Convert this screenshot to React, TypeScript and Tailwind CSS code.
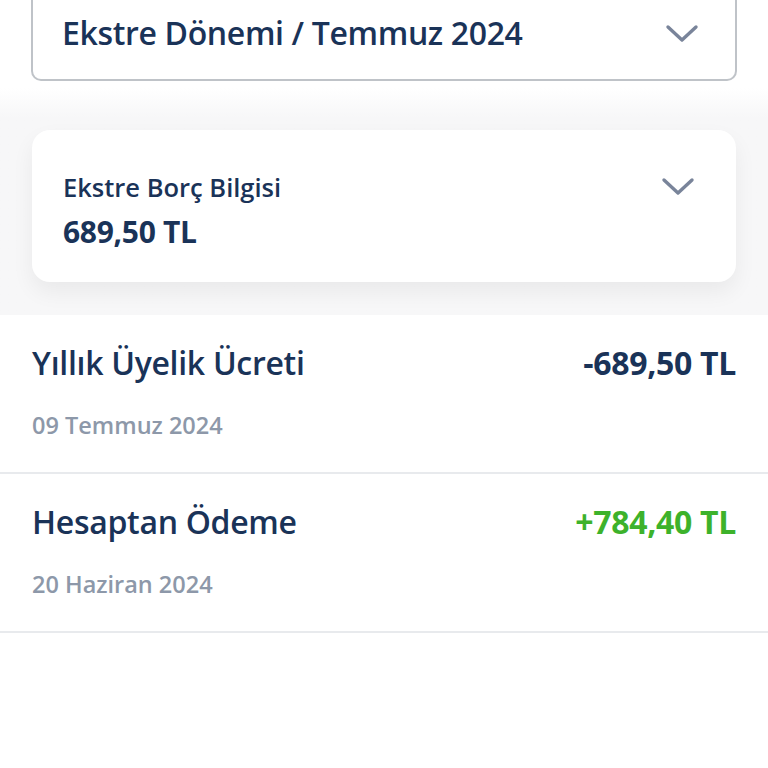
interface Txn {
  title: string;
  amount: string;
  date: string;
  positive?: boolean;
}

const txns: Txn[] = [
  { title: "Yıllık Üyelik Ücreti", amount: "-689,50 TL", date: "09 Temmuz 2024" },
  { title: "Hesaptan Ödeme", amount: "+784,40 TL", date: "20 Haziran 2024", positive: true },
];

function Chevron() {
  return (
    <svg width="34" height="20" viewBox="0 0 34 20" fill="none">
      <polyline
        points="3,4 17,17 31,4"
        stroke="#79849a"
        strokeWidth="3.4"
        strokeLinecap="round"
        strokeLinejoin="round"
      />
    </svg>
  );
}

export default function App() {
  return (
    <div className="w-[768px] h-[768px] bg-white overflow-hidden font-['Open_Sans',sans-serif] text-[#1a3358]">
      <div className="px-[31px] pb-[7px] -mt-[20px]">
        <div className="h-[101px] border-[2.5px] border-t-0 border-[#bfc3c8] rounded-b-[10px] flex items-start justify-between pl-[29px] pr-[36px] pt-[33px]">
          <span className="text-[32px] leading-[40px] font-semibold tracking-[-0.35px]">Ekstre Dönemi / Temmuz 2024</span>
          <div className="pt-[10px]">
            <Chevron />
          </div>
        </div>
      </div>
      <div className="bg-gradient-to-b from-white to-[#f7f7f8] to-[30px] px-[32px] pt-[42px] pb-[33px]">
        <div className="bg-white rounded-[18px] shadow-[0_10px_22px_rgba(0,0,0,0.06)] h-[152px] pl-[31px] pr-[41px] pt-[42px] flex justify-between">
          <div className="flex flex-col">
            <span className="text-[25.5px] font-semibold leading-[30px]">Ekstre Borç Bilgisi</span>
            <span className="text-[30px] font-bold leading-[34px] mt-[13px] tracking-[-0.3px]">689,50 TL</span>
          </div>
          <div className="pt-[4px]">
            <Chevron />
          </div>
        </div>
      </div>
      {txns.map((t) => (
        <div key={t.title} className="border-b-2 border-[#e8eaed] px-[32px] pt-[28px] pb-[32px] flex flex-col">
          <div className="flex justify-between items-center leading-[40px]">
            <span className="text-[32px] font-semibold tracking-[-0.3px]">{t.title}</span>
            <span className={`text-[32px] font-bold tracking-[-0.3px] ${t.positive ? "text-[#3db22b]" : "text-[#1a3358]"}`}>
              {t.amount}
            </span>
          </div>
          <span className="text-[23.5px] leading-[30px] font-semibold text-[#8d98a9] mt-[27px]">{t.date}</span>
        </div>
      ))}
    </div>
  );
}
